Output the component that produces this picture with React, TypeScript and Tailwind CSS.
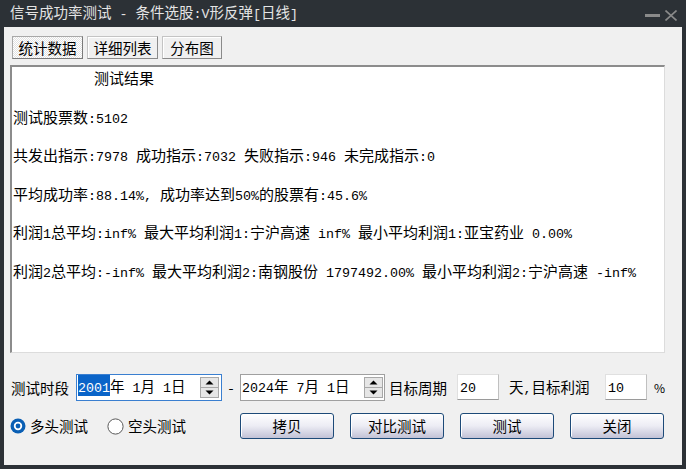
import React from "react";

const lines = [
  "测试股票数:5102",
  "共发出指示:7978 成功指示:7032 失败指示:946 未完成指示:0",
  "平均成功率:88.14%, 成功率达到50%的股票有:45.6%",
  "利润1总平均:inf% 最大平均利润1:宁沪高速 inf% 最小平均利润1:亚宝药业 0.00%",
  "利润2总平均:-inf% 最大平均利润2:南钢股份 1797492.00% 最小平均利润2:宁沪高速 -inf%",
];

function Mixed({ text }: { text: string }) {
  const parts = text.match(/[\x20-\x7e]+|[^\x20-\x7e]+/g) || [];
  return (
    <>
      {parts.map((p, i) =>
        /^[\x20-\x7e]+$/.test(p) ? (
          <span key={i} className="font-['Liberation_Mono',monospace] text-[13.33px] whitespace-pre">
            {p}
          </span>
        ) : (
          <span key={i}>{p}</span>
        )
      )}
    </>
  );
}

function Spin() {
  return (
    <div className="flex flex-col w-[19px] h-[21px] border border-[#a8a8a8] bg-[#e6e6e6]">
      <div className="flex-1 flex items-center justify-center border-b border-[#a8a8a8]">
        <svg width="9" height="5" viewBox="0 0 9 5"><path d="M0.5 4.5 L4.5 0.5 L8.5 4.5 Z" fill="#000" /></svg>
      </div>
      <div className="flex-1 flex items-center justify-center">
        <svg width="9" height="5" viewBox="0 0 9 5"><path d="M0.5 0.5 L4.5 4.5 L8.5 0.5 Z" fill="#000" /></svg>
      </div>
    </div>
  );
}

function Btn({ label }: { label: string }) {
  return (
    <div className="w-[94px] h-[26px] rounded-[3px] border border-[#1d4a78] bg-linear-to-b from-[#ffffff] via-[#ececf4] to-[#c2c2d6] shadow-[inset_1px_1px_0_#ffffff] flex items-center justify-center text-[14.5px] text-black">
      {label}
    </div>
  );
}

export default function App() {
  return (
    <div className="w-[686px] h-[469px] bg-[#2c3136] flex flex-col font-['Noto_Sans_CJK_SC',sans-serif] overflow-hidden">
      {/* title bar */}
      <div className="h-[27px] flex items-center justify-between pl-[10px] pr-[9px]">
        <span className="text-[14.5px] text-[#e4e4e4] leading-none whitespace-pre">
          <Mixed text="信号成功率测试 - 条件选股:V形反弹[日线]" />
        </span>
        <div className="flex items-center gap-[5px] mt-[4px]">
          <div className="w-[15px] h-[3px] bg-[#8a8a8a]" />
          <svg width="12" height="11" viewBox="0 0 12 11">
            <path d="M0.5 0.5 L11.5 10.5 M11.5 0.5 L0.5 10.5" stroke="#8a8a8a" strokeWidth="1.6" />
          </svg>
        </div>
      </div>
      {/* body */}
      <div className="flex-1 mx-[4px] mb-[4px] bg-[#f0f0f0] flex flex-col pl-[6px]">
        {/* tabs */}
        <div className="flex mt-[9px] ml-[2px] h-[23px] gap-[4px]">
          <div className="w-[71px] h-[23px] flex items-center justify-center text-[14.5px] text-black border border-t-[#a8a8a8] border-l-[#a8a8a8] border-b-[#7a7a7a] border-r-[#7a7a7a] bg-[repeating-conic-gradient(#ffffff_0_25%,#e2e2e2_0_50%)] bg-size-[2px_2px]">
            统计数据
          </div>
          <div className="w-[71px] h-[23px] flex items-center justify-center text-[14.5px] text-black border border-[#c4c4c4] border-b-[#8a8a8a] border-r-[#8a8a8a] bg-[#f0f0f0] shadow-[inset_1px_1px_0_#ffffff]">
            详细列表
          </div>
          <div className="w-[60px] h-[23px] flex items-center justify-center text-[14.5px] text-black border border-[#c4c4c4] border-b-[#8a8a8a] border-r-[#8a8a8a] bg-[#f0f0f0] shadow-[inset_1px_1px_0_#ffffff]">
            分布图
          </div>
        </div>
        {/* text area */}
        <div className="mt-[6px] w-[655px] h-[288px] bg-white border-t-2 border-l-2 border-t-[#8c8c8c] border-l-[#8c8c8c] border-r border-b border-r-[#dcdcdc] border-b-[#dcdcdc] pl-[1px] pt-[1px] text-[15px] leading-[19.25px] text-black">
          <div className="h-[38.5px] pl-[81px]">测试结果</div>
          {lines.map((l, i) => (
            <div key={i} className="h-[38.5px] whitespace-pre">
              <Mixed text={l} />
            </div>
          ))}
        </div>
        {/* row 1 */}
        <div className="flex items-center mt-[21px] h-[27px] text-[14.5px] text-black">
          <div className="w-[66px] pl-[1px]">测试时段</div>
          <div className="w-[146px] h-[27px] border border-[#3a7fd0] bg-white flex items-center pl-[1px] pr-[2px]">
            <span className="flex-1 whitespace-pre leading-none">
              <span className="bg-[#0a64c8] text-white">
                <Mixed text="2001" />
              </span>
              <Mixed text="年 1月 1日" />
            </span>
            <Spin />
          </div>
          <div className="w-[18px] text-center">-</div>
          <div className="w-[145px] h-[27px] border border-[#a0a0a0] bg-white flex items-center pl-[1px] pr-[1px]">
            <span className="flex-1 whitespace-pre leading-none">
              <Mixed text="2024年 7月 1日" />
            </span>
            <Spin />
          </div>
          <div className="w-[62px] pl-[4px]">目标周期</div>
          <div className="ml-[10px] w-[42px] h-[26px] bg-white border border-[#e0e0e0] border-b-[#9a9a9a] border-r-[#c0c0c0] leading-none pl-[2px] pt-[4px] self-start">
            <Mixed text="20" />
          </div>
          <div className="ml-[10px] w-[96px] whitespace-pre">
            <Mixed text="天," />
            目标利润
          </div>
          <div className="w-[42px] h-[26px] bg-white border border-[#e0e0e0] border-b-[#9a9a9a] border-r-[#c0c0c0] leading-none pl-[2px] pt-[4px] self-start">
            <Mixed text="10" />
          </div>
          <div className="ml-[7px] text-[12px]">%</div>
        </div>
        {/* row 2 */}
        <div className="flex items-center mt-[12px] h-[26px] text-[14.5px] text-black">
          <div className="flex items-center w-[97px]">
            <svg width="16" height="16" viewBox="0 0 16 16">
              <circle cx="8" cy="8" r="7.5" fill="#0a5fb4" />
              <circle cx="8" cy="8" r="4.2" fill="#ffffff" />
              <circle cx="8" cy="8" r="2.4" fill="#0a5fb4" />
            </svg>
            <span className="ml-[4px]">多头测试</span>
          </div>
          <div className="flex items-center w-[133px]">
            <svg width="17" height="17" viewBox="0 0 17 17">
              <circle cx="8.5" cy="8.5" r="7.6" fill="#ffffff" stroke="#5a5a5a" strokeWidth="1" />
            </svg>
            <span className="ml-[4px]">空头测试</span>
          </div>
          <div className="flex gap-[16px]">
            <Btn label="拷贝" />
            <Btn label="对比测试" />
            <Btn label="测试" />
            <Btn label="关闭" />
          </div>
        </div>
      </div>
    </div>
  );
}
